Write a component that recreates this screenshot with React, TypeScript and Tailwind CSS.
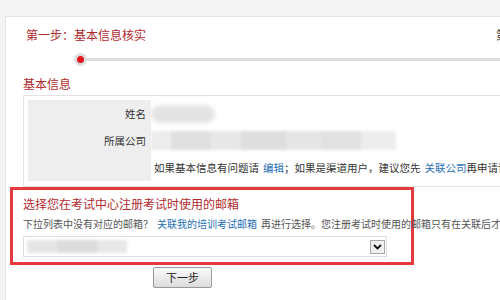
import React from "react";

const font = { fontFamily: '"Noto Sans CJK SC", "Liberation Sans", sans-serif' };

function Blur({ className }: { className: string }) {
  return <div className={`blur-[2px] ${className}`} />;
}

export default function App() {
  return (
    <div
      className="h-[300px] w-[500px] overflow-hidden bg-[#f4f4f4] pl-[5px] pt-4 text-[#333]"
      style={font}
    >
      <div className="h-full overflow-hidden border-l border-t border-[#e4e4e4] bg-white">
        {/* steps header */}
        <div className="flex h-9 items-center whitespace-nowrap pl-5 text-[12px] text-[#b02a2e]">
          <span className="w-[470px] shrink-0">第一步：基本信息核实</span>
          <span className="shrink-0 text-[#333]">第二步：邮箱确认</span>
        </div>
        <div className="flex h-3 items-center pl-[68px]">
          <div className="flex h-[13px] w-[13px] shrink-0 items-center justify-center rounded-full bg-[#dedede]">
            <div className="h-[7px] w-[7px] rounded-full bg-[#e3141c]" />
          </div>
          <div className="h-[3px] flex-1 bg-[#dcdcdc]" />
        </div>

        {/* basic info */}
        <div className="mt-3 pl-[17px] text-[12px] leading-[14px] text-[#b02a2e]">基本信息</div>
        <div className="ml-[17px] mt-1 border-b border-l border-t border-[#e3e3e3] pb-[5px] pl-1 pt-1">
          <div className="grid grid-cols-[123px_1fr]">
            <div className="flex h-[27px] items-center justify-end bg-[#eeeeee] pr-[5px] text-[10.5px]">
              姓名
            </div>
            <div className="flex h-[27px] items-center">
              <Blur className="h-[18px] w-[64px] rounded-full bg-[#e4e4e4]" />
            </div>
            <div className="flex h-[27px] items-center justify-end bg-[#eeeeee] pr-[5px] text-[10.5px]">
              所属公司
            </div>
            <div className="flex h-[27px] items-center">
              <div className="flex h-[19px] w-[245px] blur-[1.5px]">
                <div className="w-[20px] bg-[#ececec]" />
                <div className="w-[40px] bg-[#e0e0e0]" />
                <div className="w-[30px] bg-[#e8e8e8]" />
                <div className="w-[45px] bg-[#dedede]" />
                <div className="w-[35px] bg-[#e6e6e6]" />
                <div className="w-[40px] bg-[#e1e1e1]" />
                <div className="w-[35px] bg-[#ededed]" />
              </div>
            </div>
            <div className="h-[27px] bg-[#eeeeee]" />
            <div className="flex h-[27px] items-center whitespace-nowrap pl-[3px] text-[10.5px]">
              如果基本信息有问题请
              <span className="ml-[4px] text-[#1f6fb5]">编辑</span>；如果是渠道用户，建议您先
              <span className="ml-[4px] text-[#1f6fb5]">关联公司</span>再申请证书
            </div>
          </div>
        </div>

        {/* email selection */}
        <div className="ml-1 w-[404px] border-[3px] border-[#e6393e] pb-[5px] pl-[10px] pt-[7px]">
          <div className="text-[12px] leading-[14px] text-[#b02a2e]">选择您在考试中心注册考试时使用的邮箱</div>
          <div className="mt-[6px] whitespace-nowrap text-[10px] leading-[14px] text-[#555]">
            下拉列表中没有对应的邮箱？<span className="mx-[4px] text-[#1f6fb5]">关联我的培训考试邮箱</span>
            再进行选择。您注册考试时使用的邮箱只有在关联后才能在此选择
          </div>
          <div className="mt-[5px] flex h-[21px] w-[364px] items-center justify-between border border-[#dedede] bg-white pl-[3px] pr-[1px]">
            <div className="flex h-[13px] w-[100px] blur-[1.5px]">
              <div className="w-[30px] bg-[#e6e6e6]" />
              <div className="w-[40px] bg-[#dcdcdc]" />
              <div className="w-[30px] bg-[#e8e8e8]" />
            </div>
            <div className="flex h-[14px] w-[15px] items-center justify-center border border-[#a9a9a9] bg-[#f0f0f0]">
              <svg width="9" height="6" viewBox="0 0 9 6">
                <path d="M1 1l3.5 3.5L8 1" fill="none" stroke="#111" strokeWidth="1.8" />
              </svg>
            </div>
          </div>
        </div>

        <button
          type="button"
          className="ml-[147px] mt-[2px] flex h-[21px] w-[59px] items-center justify-center rounded-[2px] border border-[#9a9a9a] bg-gradient-to-b from-[#fbfbfb] to-[#dcdcdc] text-[11px] text-[#222]"
        >
          下一步
        </button>
      </div>
    </div>
  );
}
